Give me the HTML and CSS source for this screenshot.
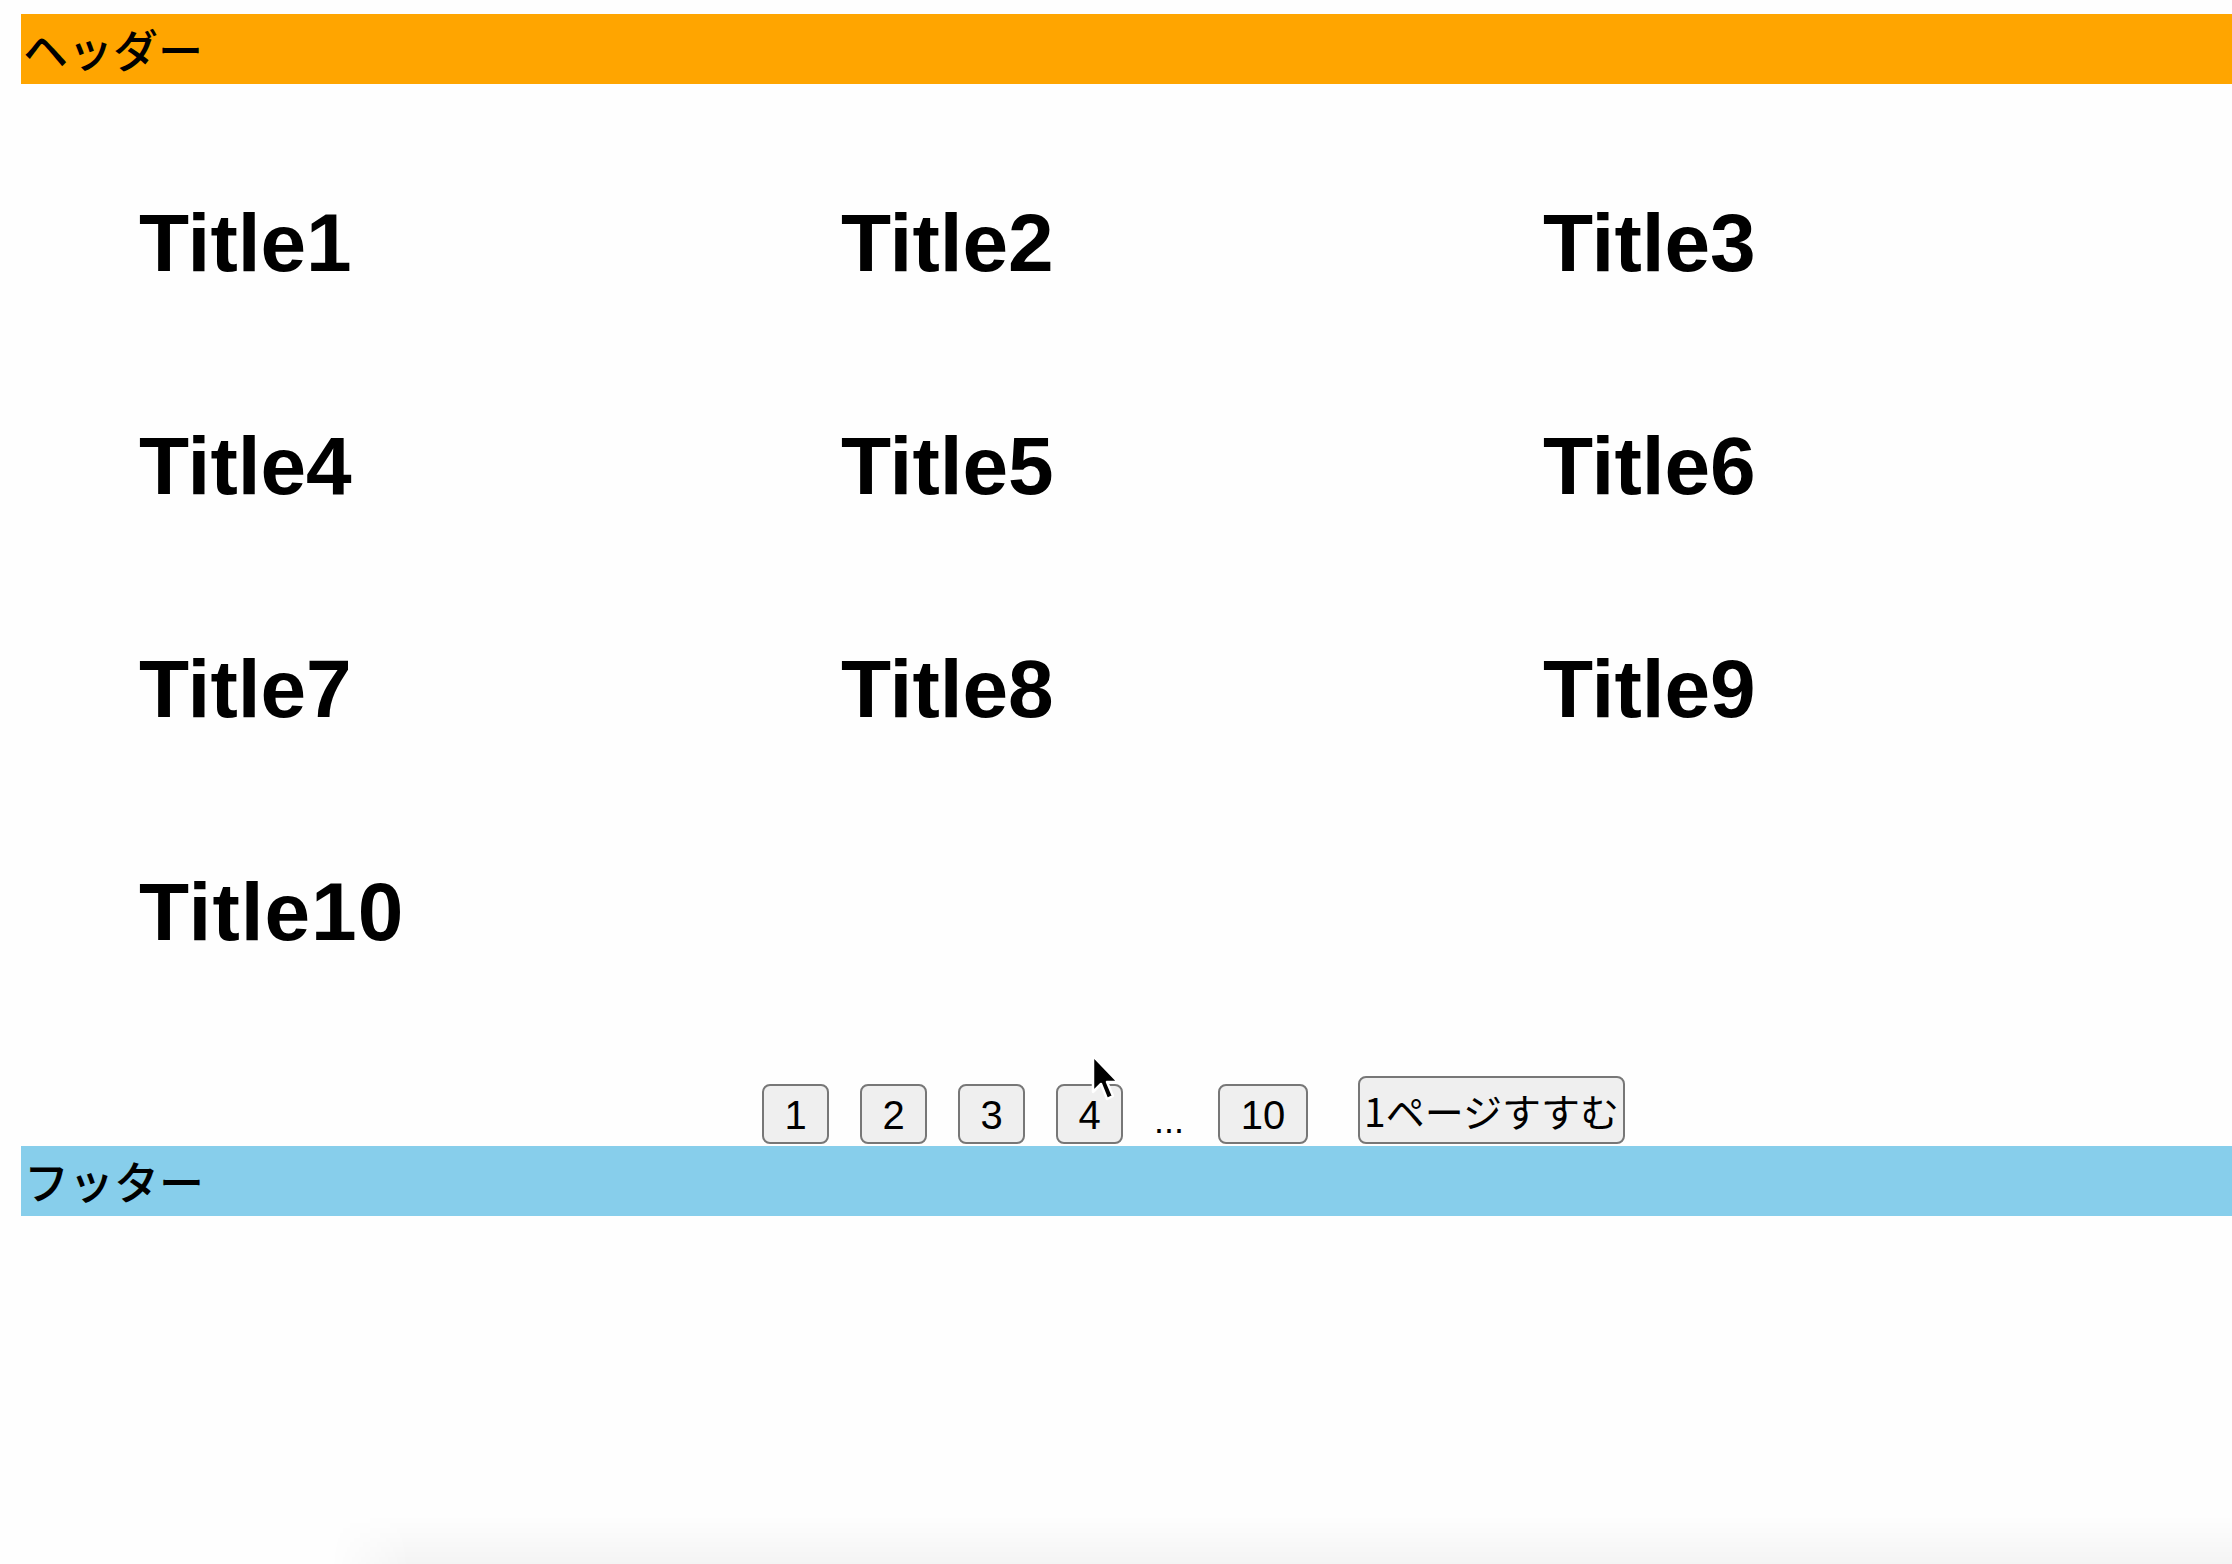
FILE: index.html
```html
<!DOCTYPE html>
<html lang="ja">
<head>
    <meta charset="UTF-8">
    <meta name="viewport" content="width=device-width, initial-scale=1.0">
    <title>ページネーション</title>
    <link rel="stylesheet" href="styles.css">
</head>
<body>

    <header class="header">ヘッダー</header>

    <main class="list">
        <h2 class="title">Title1</h2>
        <h2 class="title">Title2</h2>
        <h2 class="title">Title3</h2>
        <h2 class="title">Title4</h2>
        <h2 class="title">Title5</h2>
        <h2 class="title">Title6</h2>
        <h2 class="title">Title7</h2>
        <h2 class="title">Title8</h2>
        <h2 class="title">Title9</h2>
        <h2 class="title">Title10</h2>
    </main>

    <nav class="pager">
        <button class="page-btn">1</button>
        <button class="page-btn">2</button>
        <button class="page-btn">3</button>
        <button class="page-btn">4</button>
        <span class="dots">...</span>
        <button class="page-btn wide">10</button>
        <button class="next-btn">1ページすすむ</button>
    </nav>

    <footer class="footer">フッター</footer>

    <svg class="cursor" width="30" height="50" viewBox="0 0 30 50">
        <path d="M2 2 L2 38 L10 30 L16 45 L22 42 L16 28 L27 28 Z" fill="#000" stroke="#fff" stroke-width="2.5" stroke-linejoin="round"/>
    </svg>

    <div class="shade"></div>

</body>
</html>
```

FILE: styles.css
```css
body {
    margin: 0;
    padding: 14px 0 0 21px;
    background: #fefefe;
    font-family: "Liberation Sans", "Noto Sans CJK JP", sans-serif;
    color: #000;
}
.header {
    height: 70px;
    line-height: 70px;
    padding-left: 2px;
    background: #ffa500;
    font-family: "Noto Sans CJK JP", sans-serif;
    font-size: 45px;
    font-weight: 500;
}
.list {
    display: grid;
    grid-template-columns: repeat(3, 702px);
    grid-auto-rows: 223px;
    align-items: center;
    padding: 47px 0 3px 118px;
}
.title {
    margin: 0;
    font-size: 82px;
    font-weight: bold;
    line-height: 1;
}
.title:last-child {
    letter-spacing: 1px;
}
.pager {
    display: flex;
    align-items: flex-end;
    gap: 31px;
    margin: 50px 0 2px;
    padding-left: 741px;
}
.page-btn,
.next-btn {
    box-sizing: border-box;
    background: #efefef;
    border: 2.5px solid #777;
    border-radius: 8px;
    color: #000;
    padding: 0;
}
.page-btn {
    width: 67px;
    height: 60px;
    font-family: "Liberation Sans", sans-serif;
    font-size: 40px;
    line-height: 54px;
    padding-top: 2px;
}
.page-btn.wide {
    width: 90px;
}
.dots {
    margin-right: 3px;
    font-size: 36px;
    line-height: 46px;
}
.next-btn {
    margin-left: 19px;
    width: 267px;
    height: 68px;
    padding: 0 4px;
    font-family: "Noto Sans CJK JP", sans-serif;
    font-size: 39px;
    line-height: 62px;
    text-align: center;
    white-space: nowrap;
}
.footer {
    height: 70px;
    line-height: 70px;
    padding-left: 3px;
    background: #87ceeb;
    font-family: "Noto Sans CJK JP", sans-serif;
    font-size: 45px;
    font-weight: 500;
}
.cursor {
    position: absolute;
    left: 1091px;
    top: 1054px;
}
.shade {
    position: fixed;
    left: 330px;
    right: 0;
    bottom: 0;
    height: 48px;
    background: linear-gradient(to bottom, rgba(0, 0, 0, 0), rgba(0, 0, 0, 0.04));
    -webkit-mask-image: linear-gradient(to right, transparent, #000 80px);
    mask-image: linear-gradient(to right, transparent, #000 80px);
}
```
